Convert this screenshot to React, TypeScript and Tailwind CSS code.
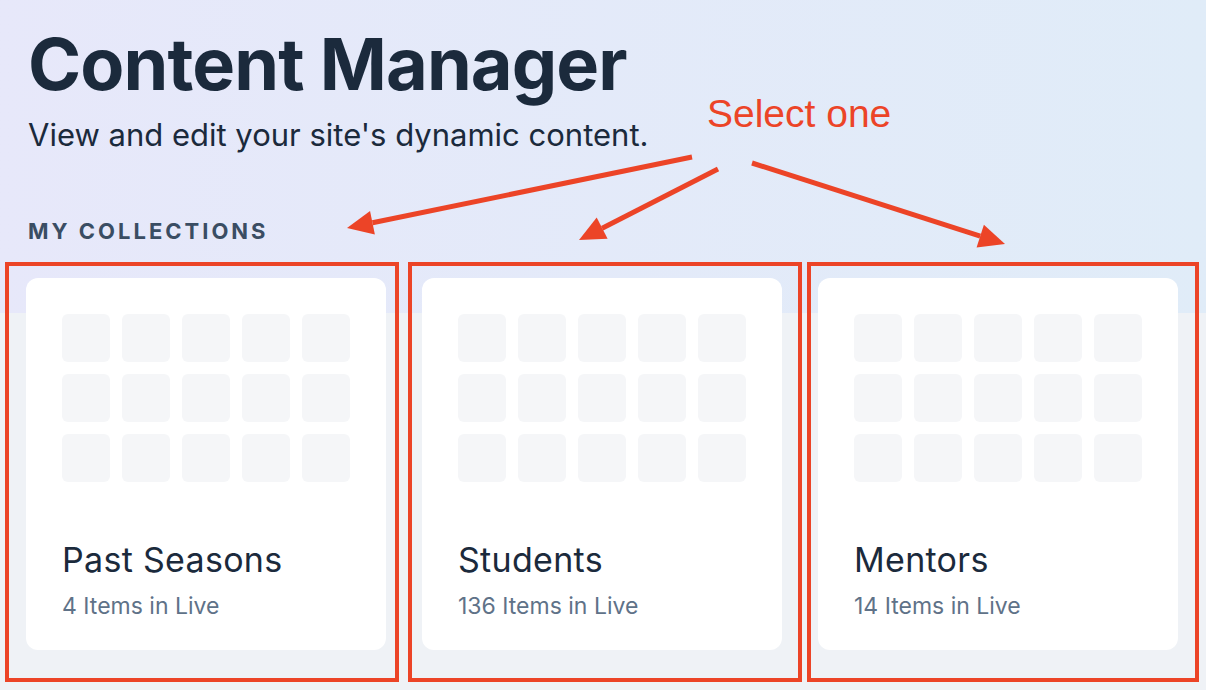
import React from "react";

const collections = [
  { name: "Past Seasons", count: "4 Items in Live" },
  { name: "Students", count: "136 Items in Live" },
  { name: "Mentors", count: "14 Items in Live" },
];

// annotation arrows: tail -> tip
const arrows = [
  { x1: 692, y1: 157, x2: 347, y2: 228 },
  { x1: 718, y1: 169, x2: 579, y2: 240 },
  { x1: 752, y1: 163, x2: 1005, y2: 244 },
];

function Arrow({ x1, y1, x2, y2 }: { x1: number; y1: number; x2: number; y2: number }) {
  const ang = Math.atan2(y2 - y1, x2 - x1);
  const len = 26;
  const half = 12;
  const bx = x2 - Math.cos(ang) * len;
  const by = y2 - Math.sin(ang) * len;
  const px = -Math.sin(ang) * half;
  const py = Math.cos(ang) * half;
  return (
    <g>
      <line x1={x1} y1={y1} x2={bx} y2={by} stroke="#ec4427" strokeWidth={5} />
      <polygon
        points={`${x2},${y2} ${bx + px},${by + py} ${bx - px},${by - py}`}
        fill="#ec4427"
      />
    </g>
  );
}

function CollectionCard({ name, count }: { name: string; count: string }) {
  return (
    <div className="w-[360px] h-[372px] bg-white rounded-[12px] px-9 pt-9 flex flex-col">
      <div className="grid grid-cols-5 gap-3 w-[288px]">
        {Array.from({ length: 15 }).map((_, i) => (
          <div key={i} className="w-12 h-12 rounded-[6px] bg-[#f5f6f8]" />
        ))}
      </div>
      <div className="mt-[58px] text-[34px] leading-[40px] text-[#1b2a3c] tracking-[0.3px]">
        {name}
      </div>
      <div className="mt-[12px] text-[23px] leading-[28px] text-[#5f7288]">{count}</div>
    </div>
  );
}

export default function App() {
  return (
    <div
      className="relative w-[1206px] h-[690px] overflow-hidden bg-[#eff2f6]"
      style={{ fontFamily: "Inter, 'Noto Sans', sans-serif" }}
    >
      <div className="absolute left-0 top-0 w-full h-[313px] bg-gradient-to-r from-[#e7e8fa] to-[#e0ecf8]" />

      <div className="relative pl-[28px] pt-[28px]">
        <h1 className="text-[72px] leading-[72px] font-bold text-[#1b2a3c] tracking-[-0.9px]">
          Content Manager
        </h1>
        <p className="mt-[16px] text-[31px] leading-[38px] text-[#1b2a3c]">
          View and edit your site's dynamic content.
        </p>
        <div className="mt-[64px] text-[22px] leading-[26px] font-bold tracking-[3px] text-[#3a4d63]">
          MY COLLECTIONS
        </div>
      </div>

      <div className="relative flex gap-9 pl-[26px] mt-[34px]">
        {collections.map((c) => (
          <CollectionCard key={c.name} name={c.name} count={c.count} />
        ))}
      </div>

      {/* annotations */}
      <div
        className="absolute left-[707px] top-[92px] text-[39px] leading-[44px] text-[#ec4427]"
        style={{ fontFamily: "'Liberation Sans', Arial, sans-serif" }}
      >
        Select one
      </div>
      <div className="absolute left-[5px] top-[262px] w-[394px] h-[420px] border-4 border-[#ec4427]" />
      <div className="absolute left-[408px] top-[262px] w-[394px] h-[420px] border-4 border-[#ec4427]" />
      <div className="absolute left-[807px] top-[262px] w-[392px] h-[420px] border-4 border-[#ec4427]" />
      <svg className="absolute left-0 top-0" width={1206} height={690}>
        {arrows.map((a, i) => (
          <Arrow key={i} {...a} />
        ))}
      </svg>
    </div>
  );
}
